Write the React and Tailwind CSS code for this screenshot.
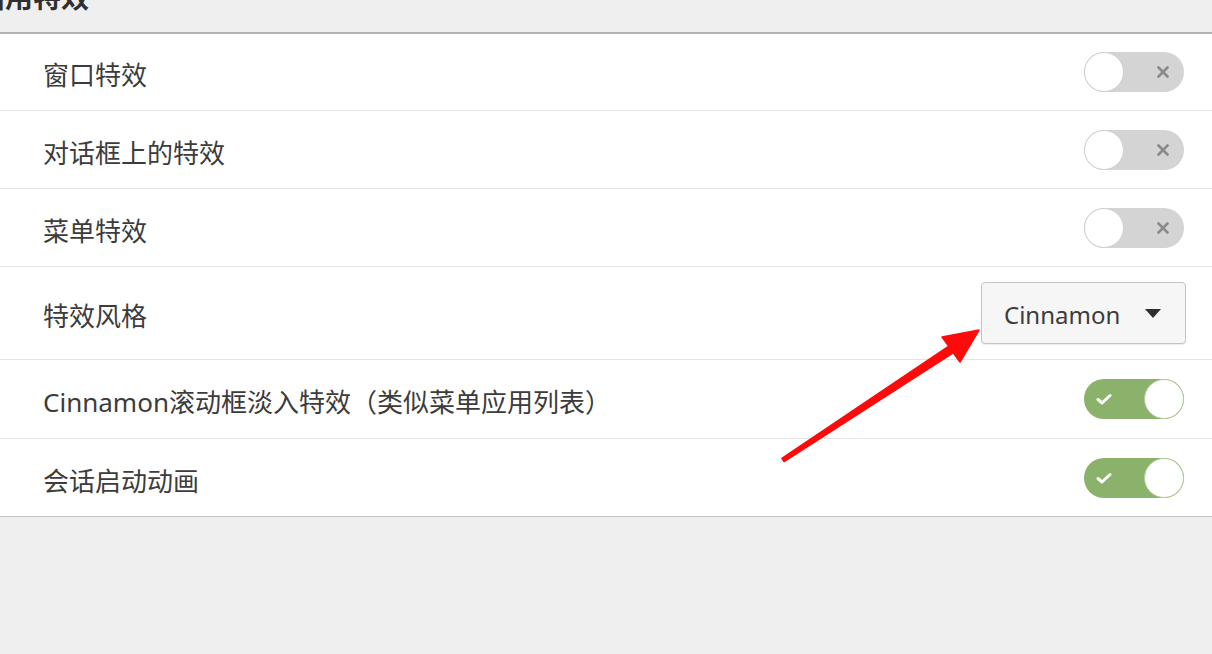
import { useState } from "react";

const FONT = { fontFamily: '"Noto Sans", "Noto Sans CJK SC", sans-serif' };

const rows = [
  { label: "窗口特效", kind: "switch", on: false, h: "h-[77px]" },
  { label: "对话框上的特效", kind: "switch", on: false, h: "h-[78px]" },
  { label: "菜单特效", kind: "switch", on: false, h: "h-[78px]" },
  { label: "特效风格", kind: "select", value: "Cinnamon", h: "h-[93px]" },
  { label: "Cinnamon滚动框淡入特效（类似菜单应用列表）", kind: "switch", on: true, h: "h-[79px]" },
  { label: "会话启动动画", kind: "switch", on: true, h: "h-[78px]" },
];

const Toggle = ({ on, onClick }) => {
  if (on) {
    return (
      <button onClick={onClick} className="relative w-[100px] h-[40px] rounded-full bg-[#8bb26b]">
        <svg className="absolute left-[12px] top-[14px]" width="16" height="12" viewBox="0 0 16 12">
          <path d="M2 6.5 L6 10 L14 2.5" fill="none" stroke="#ffffff" strokeWidth="3" strokeLinecap="round" strokeLinejoin="round" />
        </svg>
        <span className="absolute right-0 top-0 w-[40px] h-[40px] rounded-full bg-white border-[1.5px] border-[#b3cd9c]" />
      </button>
    );
  }
  return (
    <button onClick={onClick} className="relative w-[100px] h-[40px] rounded-full bg-[#d4d4d4]">
      <svg className="absolute left-[73px] top-[14px]" width="12" height="12" viewBox="0 0 12 12">
        <path d="M1.5 1.5 L10.5 10.5 M10.5 1.5 L1.5 10.5" stroke="#8a8a8a" strokeWidth="2.6" strokeLinecap="round" />
      </svg>
      <span className="absolute left-0 top-0 w-[40px] h-[40px] rounded-full bg-white border border-[#d0d0d0]" />
    </button>
  );
};

const App = () => {
  const [state, setState] = useState(rows.map((r) => r.on));

  const flip = (i) => setState((s) => s.map((v, j) => (j === i ? !v : v)));

  return (
    <div className="relative w-[1212px] h-[654px] overflow-hidden bg-[#efefef] text-[#3c3c3c]" style={FONT}>
      {/* section title, cut off by the top edge */}
      <div className="h-[32px] flex items-end">
        <h2 className="-ml-[23px] pb-[21px] text-[28px] leading-none font-bold text-[#2f2f2f]">启用特效</h2>
      </div>

      <div className="bg-white border-t-2 border-[#b2b2b2]">
        {rows.map((row, i) => (
          <div
            key={row.label}
            className={`${row.h} flex items-center justify-between pl-[43px] pr-[28px] border-b ${
              i === rows.length - 1 ? "border-[#c6c6c6]" : "border-[#e4e4e4]"
            }`}
          >
            <span className="pt-[6px] text-[26px] leading-none">{row.label}</span>
            {row.kind === "switch" ? (
              <Toggle on={state[i]} onClick={() => flip(i)} />
            ) : (
              <button className="-mr-[2px] w-[205px] h-[62px] flex items-center justify-between pl-[22px] pr-[24px] rounded-[4px] bg-[#f6f6f6] border border-[#c4c4c4] shadow-[0_1px_1px_rgba(0,0,0,0.08)]">
                <span className="pt-[3px] text-[24px] leading-none text-[#3c3c3c]">{row.value}</span>
                <svg width="16" height="9" viewBox="0 0 16 9">
                  <path d="M0 0 H16 L8 9 Z" fill="#2f2f2f" />
                </svg>
              </button>
            )}
          </div>
        ))}
      </div>

      {/* red annotation arrow */}
      <svg className="absolute left-0 top-0 pointer-events-none" width="1212" height="654" viewBox="0 0 1212 654">
        <polygon
          points="781.9,458.3 948.8,346.2 942,337 979,330 960,362 953.2,352.8 784.1,461.7"
          fill="#fe0a0a"
          stroke="#fe0a0a"
          strokeWidth="1.5"
          strokeLinejoin="round"
        />
      </svg>
    </div>
  );
};

export default App;
